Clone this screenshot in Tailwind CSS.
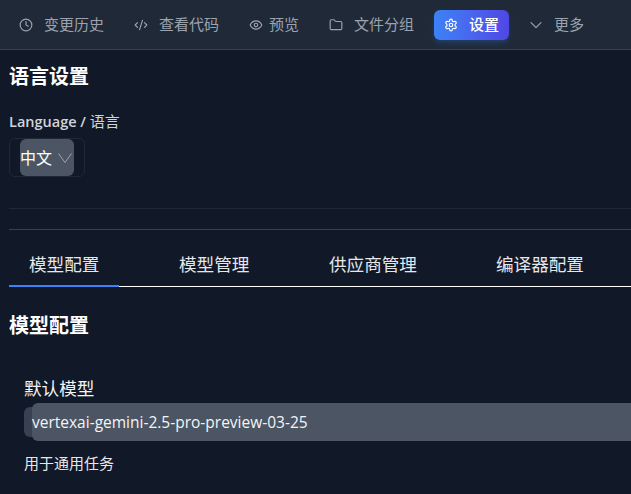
<!DOCTYPE html>
<html lang="zh-CN">
<head>
    <meta charset="UTF-8">
    <meta name="viewport" content="width=device-width, initial-scale=1.0">
    <title>设置</title>
    <script src="https://cdn.jsdelivr.net/npm/@tailwindcss/browser@4"></script>
</head>
<body class="h-[494px] w-[631px] overflow-hidden bg-[#111827] font-['Open_Sans','Noto_Sans_CJK_SC',sans-serif] text-white">

<!-- top nav -->
<nav class="flex h-[50px] items-center gap-[10px] border-b border-[#374151] bg-[#1f2937] pl-[9px] text-[15px] text-[#9ca3af]">
    <a class="flex h-[30px] items-center gap-[11px] px-[10px]">
        <svg class="h-[14px] w-[14px]" viewBox="0 0 24 24" fill="none" stroke="currentColor" stroke-width="2" stroke-linecap="round" stroke-linejoin="round"><circle cx="12" cy="12" r="10"/><path d="M12 6v6l4 2"/></svg>
        <span>变更历史</span>
    </a>
    <a class="flex h-[30px] items-center gap-[11px] px-[10px]">
        <svg class="h-[14px] w-[14px]" viewBox="0 0 24 24" fill="none" stroke="currentColor" stroke-width="2" stroke-linecap="round" stroke-linejoin="round"><path d="m18 16 4-4-4-4"/><path d="m6 8-4 4 4 4"/><path d="m14.5 4-5 16"/></svg>
        <span>查看代码</span>
    </a>
    <a class="flex h-[30px] items-center gap-[6px] px-[10px]">
        <svg class="h-[14px] w-[14px]" viewBox="0 0 24 24" fill="none" stroke="currentColor" stroke-width="2" stroke-linecap="round" stroke-linejoin="round"><path d="M2 12s3.5-7 10-7 10 7 10 7-3.5 7-10 7-10-7-10-7Z"/><circle cx="12" cy="12" r="3"/></svg>
        <span>预览</span>
    </a>
    <a class="flex h-[30px] items-center gap-[11px] px-[10px]">
        <svg class="h-[14px] w-[14px]" viewBox="0 0 24 24" fill="none" stroke="currentColor" stroke-width="2" stroke-linecap="round" stroke-linejoin="round"><path d="M20 20a2 2 0 0 0 2-2V8a2 2 0 0 0-2-2h-7.9a2 2 0 0 1-1.69-.9L9.6 3.9A2 2 0 0 0 7.93 3H4a2 2 0 0 0-2 2v13a2 2 0 0 0 2 2Z"/></svg>
        <span>文件分组</span>
    </a>
    <a class="flex h-[30px] items-center gap-[11px] rounded-md bg-gradient-to-r from-[#3b82f6] to-[#4f46e5] px-[10px] font-medium text-white shadow-md shadow-blue-500/20">
        <svg class="h-[14px] w-[14px]" viewBox="0 0 24 24" fill="none" stroke="currentColor" stroke-width="2" stroke-linecap="round" stroke-linejoin="round"><path d="M12.22 2h-.44a2 2 0 0 0-2 2v.18a2 2 0 0 1-1 1.73l-.43.25a2 2 0 0 1-2 0l-.15-.08a2 2 0 0 0-2.73.73l-.22.38a2 2 0 0 0 .73 2.73l.15.1a2 2 0 0 1 1 1.72v.51a2 2 0 0 1-1 1.74l-.15.09a2 2 0 0 0-.73 2.73l.22.38a2 2 0 0 0 2.73.73l.15-.08a2 2 0 0 1 2 0l.43.25a2 2 0 0 1 1 1.73V20a2 2 0 0 0 2 2h.44a2 2 0 0 0 2-2v-.18a2 2 0 0 1 1-1.73l.43-.25a2 2 0 0 1 2 0l.15.08a2 2 0 0 0 2.73-.73l.22-.39a2 2 0 0 0-.73-2.73l-.15-.08a2 2 0 0 1-1-1.74v-.5a2 2 0 0 1 1-1.74l.15-.09a2 2 0 0 0 .73-2.73l-.22-.38a2 2 0 0 0-2.73-.73l-.15.08a2 2 0 0 1-2 0l-.43-.25a2 2 0 0 1-1-1.73V4a2 2 0 0 0-2-2z"/><circle cx="12" cy="12" r="3"/></svg>
        <span>设置</span>
    </a>
    <a class="flex h-[30px] items-center gap-[11px] px-[10px]">
        <svg class="h-[14px] w-[14px]" viewBox="0 0 24 24" fill="none" stroke="currentColor" stroke-width="2" stroke-linecap="round" stroke-linejoin="round"><path d="m3.5 8 8.5 8.5 8.5-8.5"/></svg>
        <span>更多</span>
    </a>
</nav>

<main class="pl-[9px]">
    <!-- language -->
    <section class="border-b border-[#1f2937] pb-[31px]">
        <h2 class="pt-[13px] text-[20px] leading-[28px] font-bold">语言设置</h2>
        <label class="mt-[20px] block h-[20px] text-[15px] leading-[20px] text-[#d1d5db]"><span class="text-[14.5px] font-semibold">Language / </span>语言</label>
        <div class="mt-[7px] h-[39px] w-[76px] rounded-md border border-[#1f2937] pl-[10px]">
            <div class="flex h-[37px] w-[54px] items-center justify-between rounded-md bg-[#4b5563] pr-[2px] text-[16px]">
                <span>中文</span>
                <svg class="h-[14px] w-[14px] text-[#9ca3af]" viewBox="0 0 14 14" fill="none" stroke="currentColor" stroke-width="1"><path d="m0.5 2.5 6.5 9 6.5-9"/></svg>
            </div>
        </div>
    </section>

    <div class="mt-[20px] h-px bg-[#374151]"></div>

    <!-- tabs -->
    <div class="mt-[20px] flex h-[37px] border-b border-white text-[17.6px] text-[#e5e7eb]">
        <div class="h-[37px] w-[110px] shrink-0 border-b-2 border-[#3b82f6] pl-[20px] leading-[28px]">模型配置</div>
        <div class="pl-[60px] leading-[28px]">模型管理</div>
        <div class="pl-[79.6px] leading-[28px]">供应商管理</div>
        <div class="pl-[79px] leading-[28px]">编译器配置</div>
    </div>

    <h2 class="mt-[25px] text-[20px] leading-[28px] font-bold">模型配置</h2>

    <!-- default model -->
    <div class="mt-[36px] pl-[15px]">
        <label class="block text-[17.6px] leading-[25px] text-[#f3f4f6]">默认模型</label>
        <div class="mt-[6px] h-[30px] rounded-l-md bg-[#374151]">
            <div class="relative -top-[4px] ml-[8px] flex h-[38px] items-center rounded-l-md bg-[#4b5563] pt-[1px] text-[15.5px] text-[#f3f4f6]">vertexai-gemini-2.5-pro-preview-03-25</div>
        </div>
        <p class="mt-[16px] text-[15px] leading-[20px] text-[#e5e7eb]">用于通用任务</p>
    </div>
</main>

</body>
</html>
